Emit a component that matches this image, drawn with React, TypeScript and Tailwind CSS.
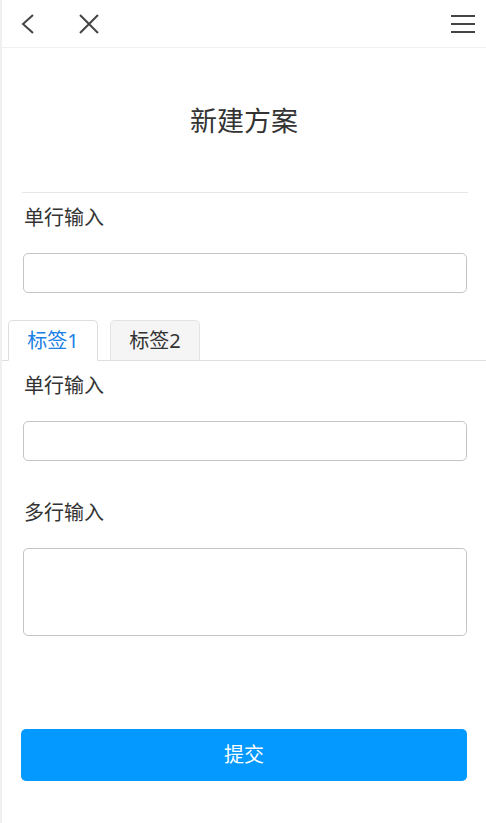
import React from 'react';

const font = { fontFamily: '"Noto Sans", "Noto Sans CJK SC", sans-serif' };

function Field({ label, multi }: { label: string; multi?: boolean }) {
  return (
    <div className="pl-[21px] pr-[19px]">
      <div className="h-[50px] pl-[1px] flex items-center text-[20px] text-[#333]">{label}</div>
      {multi ? (
        <textarea className="mt-[10px] block w-full h-[88px] border border-[#c4c4c4] rounded-[5px] resize-none outline-none" />
      ) : (
        <input className="mt-[10px] block w-full h-[40px] border border-[#c4c4c4] rounded-[5px] outline-none" />
      )}
    </div>
  );
}

export default function App() {
  return (
    <div className="w-[486px] h-[823px] bg-white flex border-l-2 border-[#efefef] overflow-hidden" style={font}>
      <div className="flex-1 flex flex-col">
        {/* top bar */}
        <div className="h-[48px] flex items-center border-b border-[#efefef] pl-[16px] pr-[10px]">
          <svg width="22" height="24" viewBox="0 0 22 24" className="text-[#444]">
            <path d="M15 3 L5 12 L15 21" fill="none" stroke="currentColor" strokeWidth="2" />
          </svg>
          <svg width="22" height="22" viewBox="0 0 22 22" className="ml-[38px] text-[#444]">
            <path d="M2 2 L20 20 M20 2 L2 20" fill="none" stroke="currentColor" strokeWidth="2" />
          </svg>
          <div className="flex-1" />
          <svg width="26" height="22" viewBox="0 0 26 22" className="text-[#444]">
            <path d="M1 3 H25 M1 11 H25 M1 19 H25" fill="none" stroke="currentColor" strokeWidth="2" />
          </svg>
        </div>

        {/* title */}
        <div className="h-[144px] flex items-center justify-center text-[27px] text-[#333] pt-[3px]">新建方案</div>
        <div className="ml-[20px] mr-[18px] border-t border-[#e6e6e6]" />

        <Field label="单行输入" />

        {/* tabs */}
        <div className="mt-[28px] flex items-end gap-[12px] pl-[6px] border-b border-[#dedede] h-[40px]">
          <div className="w-[90px] h-[41px] -mb-px bg-white border border-[#dedede] border-b-white rounded-t-[5px] flex items-center justify-center text-[20px] text-[#1a7fe6]">
            标签1
          </div>
          <div className="w-[90px] h-[40px] bg-[#f5f5f5] border border-[#e3e3e3] border-b-0 rounded-t-[5px] flex items-center justify-center text-[20px] text-[#333]">
            标签2
          </div>
        </div>

        <Field label="单行输入" />
        <div className="h-[27px]" />
        <Field label="多行输入" multi />

        <div className="px-[19px] mt-[93px]">
          <button className="w-full h-[52px] bg-[#0399ff] rounded-[5px] text-white text-[20px]">提交</button>
        </div>
      </div>
    </div>
  );
}
